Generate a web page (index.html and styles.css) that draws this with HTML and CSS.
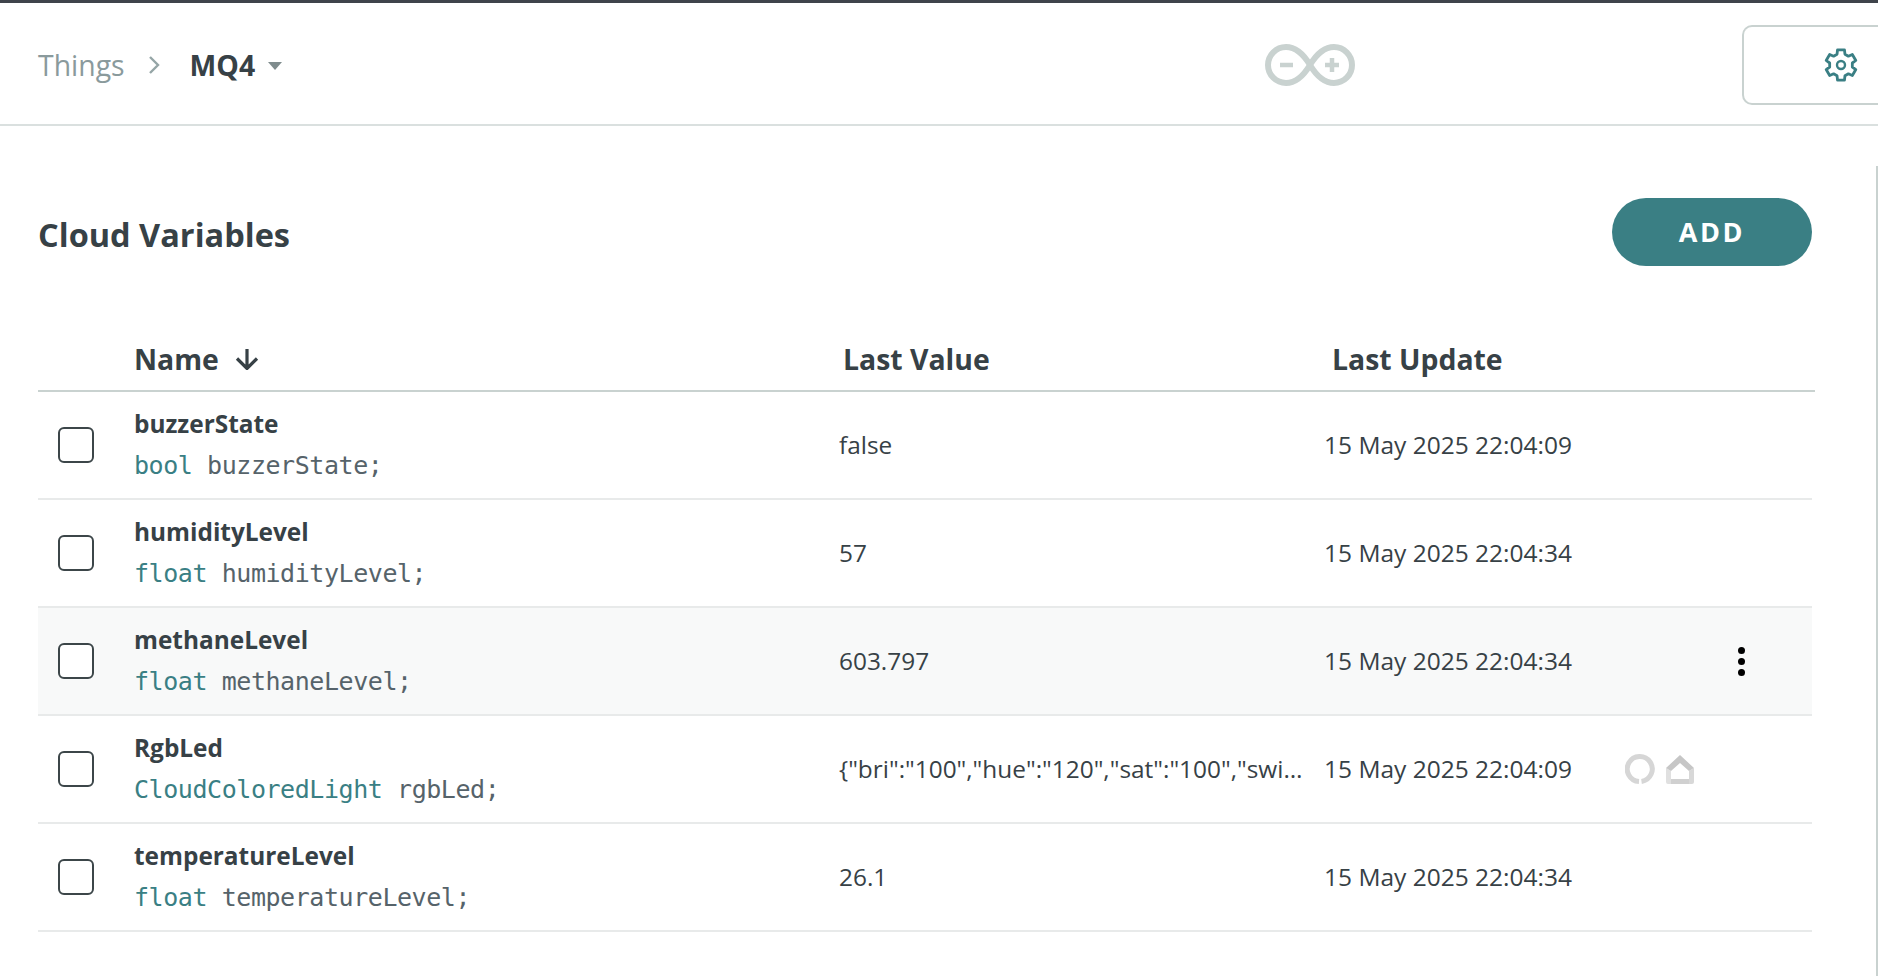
FILE: index.html
```html
<!DOCTYPE html>
<html lang="en">
<head>
<meta charset="utf-8">
<title>MQ4 - Cloud Variables</title>
<link rel="stylesheet" href="styles.css">
</head>
<body>
<div class="page">
  <header class="topbar">
    <nav class="crumbs">
      <span class="crumb-root">Things</span>
      <svg class="crumb-sep" viewBox="0 0 12 20" width="12" height="20"><path d="M2 2l8 8-8 8" fill="none" stroke="#95a5a6" stroke-width="2.4"/></svg>
      <span class="crumb-current">MQ4</span>
      <svg class="crumb-caret" viewBox="0 0 14 8" width="14" height="8"><path d="M0 0h14l-7 8z" fill="#7f8c8d"/></svg>
    </nav>
    <svg class="logo" viewBox="0 0 90 42" width="90" height="42">
      <path d="M45 21C39 11 32 3 21 3a18 18 0 0 0 0 36c11 0 18-8 24-18s13-18 24-18a18 18 0 0 1 0 36c-11 0-18-8-24-18z" fill="none" stroke="#c9d2d0" stroke-width="6"/>
      <path d="M15 21h13M60 21h14M67 14v14" fill="none" stroke="#c9d2d0" stroke-width="4.5"/>
    </svg>
    <div class="settings-tab">
      <svg viewBox="0 0 34 34" width="34" height="34"><path d="M13.07 6.190L13.510 1.900H20.490L20.930 6.190L24.390 8.190L28.330 6.430L31.820 12.470L28.330 15V19L31.820 21.530L28.330 27.570L24.390 25.810L20.930 27.810L20.490 32.100H13.510L13.070 27.810L9.610 25.810L5.670 27.570L2.180 21.530L5.670 19V15L2.180 12.470L5.670 6.430L9.610 8.190Z" fill="none" stroke="#3a7f84" stroke-width="2.800" stroke-linejoin="round"/><circle cx="17" cy="17" r="4" fill="none" stroke="#3a7f84" stroke-width="2.400"/></svg>
    </div>
  </header>
  <main class="content">
    <div class="title-row">
      <h1 class="title">Cloud Variables</h1>
      <button class="add-btn">ADD</button>
    </div>
    <div class="table-head">
      <div class="th th-name">Name
        <svg viewBox="0 0 24 22" width="24" height="22"><path d="M12 1v19M2 10.500l10 10 10-10" fill="none" stroke="#374146" stroke-width="3.200"/></svg>
      </div>
      <div class="th">Last Value</div>
      <div class="th">Last Update</div>
    </div>
    <div class="row">
      <span class="check"></span>
      <div class="var-cell"><div class="var-name">buzzerState</div><code class="decl"><span class="type">bool</span> buzzerState;</code></div>
      <div class="value">false</div>
      <div class="updated">15 May 2025 22:04:09</div>
      <div class="actions"></div>
    </div>
    <div class="row">
      <span class="check"></span>
      <div class="var-cell"><div class="var-name">humidityLevel</div><code class="decl"><span class="type">float</span> humidityLevel;</code></div>
      <div class="value">57</div>
      <div class="updated">15 May 2025 22:04:34</div>
      <div class="actions"></div>
    </div>
    <div class="row row-hover">
      <span class="check"></span>
      <div class="var-cell"><div class="var-name">methaneLevel</div><code class="decl"><span class="type">float</span> methaneLevel;</code></div>
      <div class="value">603.797</div>
      <div class="updated">15 May 2025 22:04:34</div>
      <div class="actions"><div class="kebab"><i></i><i></i><i></i></div></div>
    </div>
    <div class="row">
      <span class="check"></span>
      <div class="var-cell"><div class="var-name">RgbLed</div><code class="decl"><span class="type">CloudColoredLight</span> rgbLed;</code></div>
      <div class="value">{"bri":"100","hue":"120","sat":"100","swi":"true"}</div>
      <div class="updated">15 May 2025 22:04:09</div>
      <div class="actions assistants">
        <svg viewBox="0 0 30 30" width="30" height="30"><path d="M16.500 27.400A12.500 12.500 0 1 0 14 27.500" fill="none" stroke="#d6d6d6" stroke-width="5"/></svg>
        <svg viewBox="0 0 28 29" width="28" height="29"><path d="M0 13V27a2 2 0 0 0 2 2H8l-3-5V16z" fill="#e0e0e0"/><path d="M28 13V27a2 2 0 0 1-2 2H20l3-5V16z" fill="#d8d8d8"/><path d="M5 24H23V29H5z" fill="#d0d0d0"/><path d="M14 0L28 13L23 16L14 8L5 16L0 13z" fill="#c6c6c6"/></svg>
      </div>
    </div>
    <div class="row">
      <span class="check"></span>
      <div class="var-cell"><div class="var-name">temperatureLevel</div><code class="decl"><span class="type">float</span> temperatureLevel;</code></div>
      <div class="value">26.1</div>
      <div class="updated">15 May 2025 22:04:34</div>
      <div class="actions"></div>
    </div>
  </main>
  <div class="scroll-edge"></div>
</div>
</body>
</html>
```

FILE: styles.css
```css
* { box-sizing: border-box; }
html, body { margin: 0; height: 100%; overflow: hidden; background: #fff; }
body { font-family: "Open Sans", sans-serif; color: #374146; }
.page { position: relative; height: 976px; border-top: 3px solid #3f444b; }
.topbar {
  height: 123px;
  border-bottom: 2px solid #dae0df;
  display: flex;
  align-items: center;
  padding-left: 38px;
}
.crumbs { display: flex; align-items: center; width: 1227px; height: 60px; padding-top: 2px; }
.crumb-root { font-size: 28.400px; color: #8a9a9c; }
.crumb-sep { margin-left: 23px; }
.crumb-current { font-size: 28.400px; font-weight: 700; margin-left: 30px; }
.crumb-caret { margin-left: 13px; margin-top: 2px; }
.logo { flex: none; margin-top: 2px; }
.settings-tab {
  margin-left: 387px;
  flex: 1;
  height: 80px;
  margin-top: 3px;
  border: 2px solid #c9d2d0;
  border-right: 0;
  border-radius: 10px 0 0 10px;
  display: flex;
  align-items: center;
  padding-left: 80px;
}
.content { padding: 0 63px 0 38px; }
.title-row {
  display: flex;
  justify-content: space-between;
  align-items: center;
  margin-top: 72px;
  height: 68px;
  margin-right: 3px;
}
.title { margin: 0; font-size: 32.500px; font-weight: 700; line-height: 44px; margin-top: 6px; }
.add-btn {
  width: 200px;
  height: 68px;
  padding: 0 0 1px;
  border: 0;
  border-radius: 34px;
  background: #3a7f84;
  color: #fff;
  font: 700 27px "Open Sans", sans-serif;
  letter-spacing: 2.600px;
}
.table-head {
  display: grid;
  grid-template-columns: 96px 709px 489px 1fr;
  margin-top: 58px;
  height: 68px;
  align-items: center;
  border-bottom: 2px solid #c9d2d0;
}
.th { font-size: 28.400px; font-weight: 700; padding-top: 3px; }
.th-name { grid-column: 2; display: flex; align-items: center; gap: 16px; }
.row {
  display: grid;
  grid-template-columns: 96px 705px 485px 296px 1fr;
  align-items: center;
  height: 108px;
  border-bottom: 2px solid #e8eaea;
  margin-right: 3px;
}
.row-hover { background: #f8f9f9; }
.check {
  width: 36px;
  height: 36px;
  margin-left: 20px;
  border: 2px solid #3c4649;
  border-radius: 6px;
  background: #fff;
}
.var-name { font-size: 24.400px; font-weight: 700; line-height: 33px; }
.decl {
  display: block;
  margin-top: 10px;
  font-family: "DejaVu Sans Mono", monospace;
  font-size: 25px;
  letter-spacing: -0.440px;
  line-height: 32px;
  color: #56636a;
}
.var-cell { padding-bottom: 2px; }
.type { color: #3a7f84; }
.value, .updated { font-size: 24.500px; color: #374146; padding-bottom: 2px; }
.value {
  font-size: 24.400px;
  padding-right: 20px;
  white-space: nowrap;
  overflow: hidden;
  text-overflow: ellipsis;
}
.actions { display: flex; align-items: center; }
.kebab { display: flex; flex-direction: column; gap: 4px; margin-left: 118px; }
.kebab i { display: block; width: 7px; height: 7px; border-radius: 50%; background: #000; }
.assistants { gap: 11px; padding-left: 5px; }
.scroll-edge {
  position: absolute;
  right: 0;
  top: 163px;
  bottom: 0;
  width: 2px;
  background: #c9d2d0;
}
```
